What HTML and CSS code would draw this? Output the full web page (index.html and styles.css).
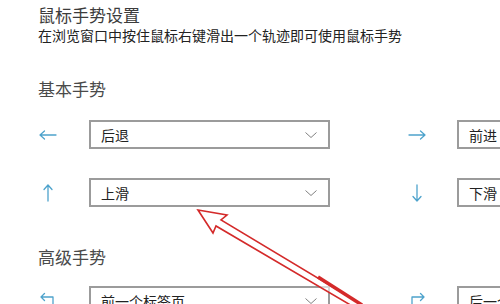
FILE: index.html
```html
<!DOCTYPE html>
<html lang="zh-CN">
<head>
<meta charset="utf-8">
<title>鼠标手势设置</title>
<link rel="stylesheet" href="styles.css">
</head>
<body>
<div class="page">
  <h1 class="title">鼠标手势设置</h1>
  <p class="desc">在浏览窗口中按住鼠标右键滑出一个轨迹即可使用鼠标手势</p>

  <h2 class="heading basic">基本手势</h2>
  <div class="grid">
    <div class="icon"><svg viewBox="0 0 20 20"><path d="M2 10H18M6.5 6L2 10L6.5 14"/></svg></div>
    <div class="select"><span>后退</span><svg class="chev" viewBox="0 0 12 6"><path d="M0.5 0.5L6 5.5L11.5 0.5"/></svg></div>
    <div class="icon right"><svg viewBox="0 0 20 20"><path d="M2 10H18M13.5 6L18 10L13.5 14"/></svg></div>
    <div class="select"><span>前进</span><svg class="chev" viewBox="0 0 12 6"><path d="M0.5 0.5L6 5.5L11.5 0.5"/></svg></div>

    <div class="icon"><svg viewBox="0 0 20 20"><path d="M10 2V18M6 6.5L10 2L14 6.5"/></svg></div>
    <div class="select"><span>上滑</span><svg class="chev" viewBox="0 0 12 6"><path d="M0.5 0.5L6 5.5L11.5 0.5"/></svg></div>
    <div class="icon right"><svg viewBox="0 0 20 20"><path d="M10 2V18M6 13.5L10 18L14 13.5"/></svg></div>
    <div class="select"><span>下滑</span><svg class="chev" viewBox="0 0 12 6"><path d="M0.5 0.5L6 5.5L11.5 0.5"/></svg></div>
  </div>

  <h2 class="heading adv">高级手势</h2>
  <div class="grid">
    <div class="icon"><svg viewBox="0 0 20 20"><path d="M3 6H15V18M6.5 2.5L3 6L6.5 9.5"/></svg></div>
    <div class="select"><span>前一个标签页</span><svg class="chev" viewBox="0 0 12 6"><path d="M0.5 0.5L6 5.5L11.5 0.5"/></svg></div>
    <div class="icon right"><svg viewBox="0 0 20 20"><path d="M5 18V6H17M13.5 2.5L17 6L13.5 9.5"/></svg></div>
    <div class="select"><span>后一个标签页</span><svg class="chev" viewBox="0 0 12 6"><path d="M0.5 0.5L6 5.5L11.5 0.5"/></svg></div>
  </div>
</div>

<svg class="annot" viewBox="0 0 500 304" width="500" height="304">
  <path class="arrow" d="M198 210L227 215L221 220L366 307L359 310L216 226L213 233Z"/>
  <path class="arrow-tail" d="M318 277L362 305"/>
</svg>
</body>
</html>
```

FILE: styles.css
```css
html, body {
  margin: 0;
  padding: 0;
  background: #ffffff;
}

body {
  width: 500px;
  height: 304px;
  overflow: hidden;
  position: relative;
  font-family: "Noto Sans CJK SC", "Noto Sans", sans-serif;
  color: #222;
}

.page {
  padding: 5px 0 0 38px;
}

.title {
  margin: 0;
  font-size: 17px;
  line-height: 20px;
  font-weight: 400;
  color: #3c3c3c;
}

.desc {
  margin: 0;
  font-size: 14px;
  line-height: 20px;
  color: #222;
  white-space: nowrap;
}

.heading {
  margin: 0;
  font-size: 17px;
  line-height: 20px;
  font-weight: 400;
  color: #4a4a4a;
}

.heading.basic {
  margin-top: 34px;
  margin-bottom: 21px;
}

.heading.adv {
  margin-top: 40px;
  margin-bottom: 19px;
}

.grid {
  display: grid;
  grid-template-columns: 51px 241px 127px 241px;
  grid-auto-rows: 29px;
  row-gap: 29px;
  align-items: center;
}

.icon {
  display: flex;
  align-items: center;
  height: 20px;
}

.icon.right {
  padding-left: 77px;
}

.icon svg {
  width: 20px;
  height: 20px;
  fill: none;
  stroke: #4ea3cc;
  stroke-width: 1.3;
  stroke-linecap: round;
  stroke-linejoin: round;
}

.select {
  box-sizing: border-box;
  height: 29px;
  border: 2px solid #9b9b9b;
  display: flex;
  align-items: center;
  justify-content: space-between;
  padding: 0 11px 0 10px;
  font-size: 14px;
  color: #222;
  white-space: nowrap;
}

.select span {
  line-height: 20px;
}

.chev {
  width: 12px;
  height: 6px;
  fill: none;
  stroke: #808080;
  stroke-width: 1;
}

.annot {
  position: absolute;
  left: 0;
  top: 0;
  pointer-events: none;
}

.arrow {
  fill: rgba(255, 255, 255, 0.6);
  stroke: #d42a2a;
  stroke-width: 1.6;
  stroke-linejoin: miter;
}

.arrow-tail {
  stroke: #d42a2a;
  stroke-width: 3.5;
  stroke-linecap: butt;
}
```
